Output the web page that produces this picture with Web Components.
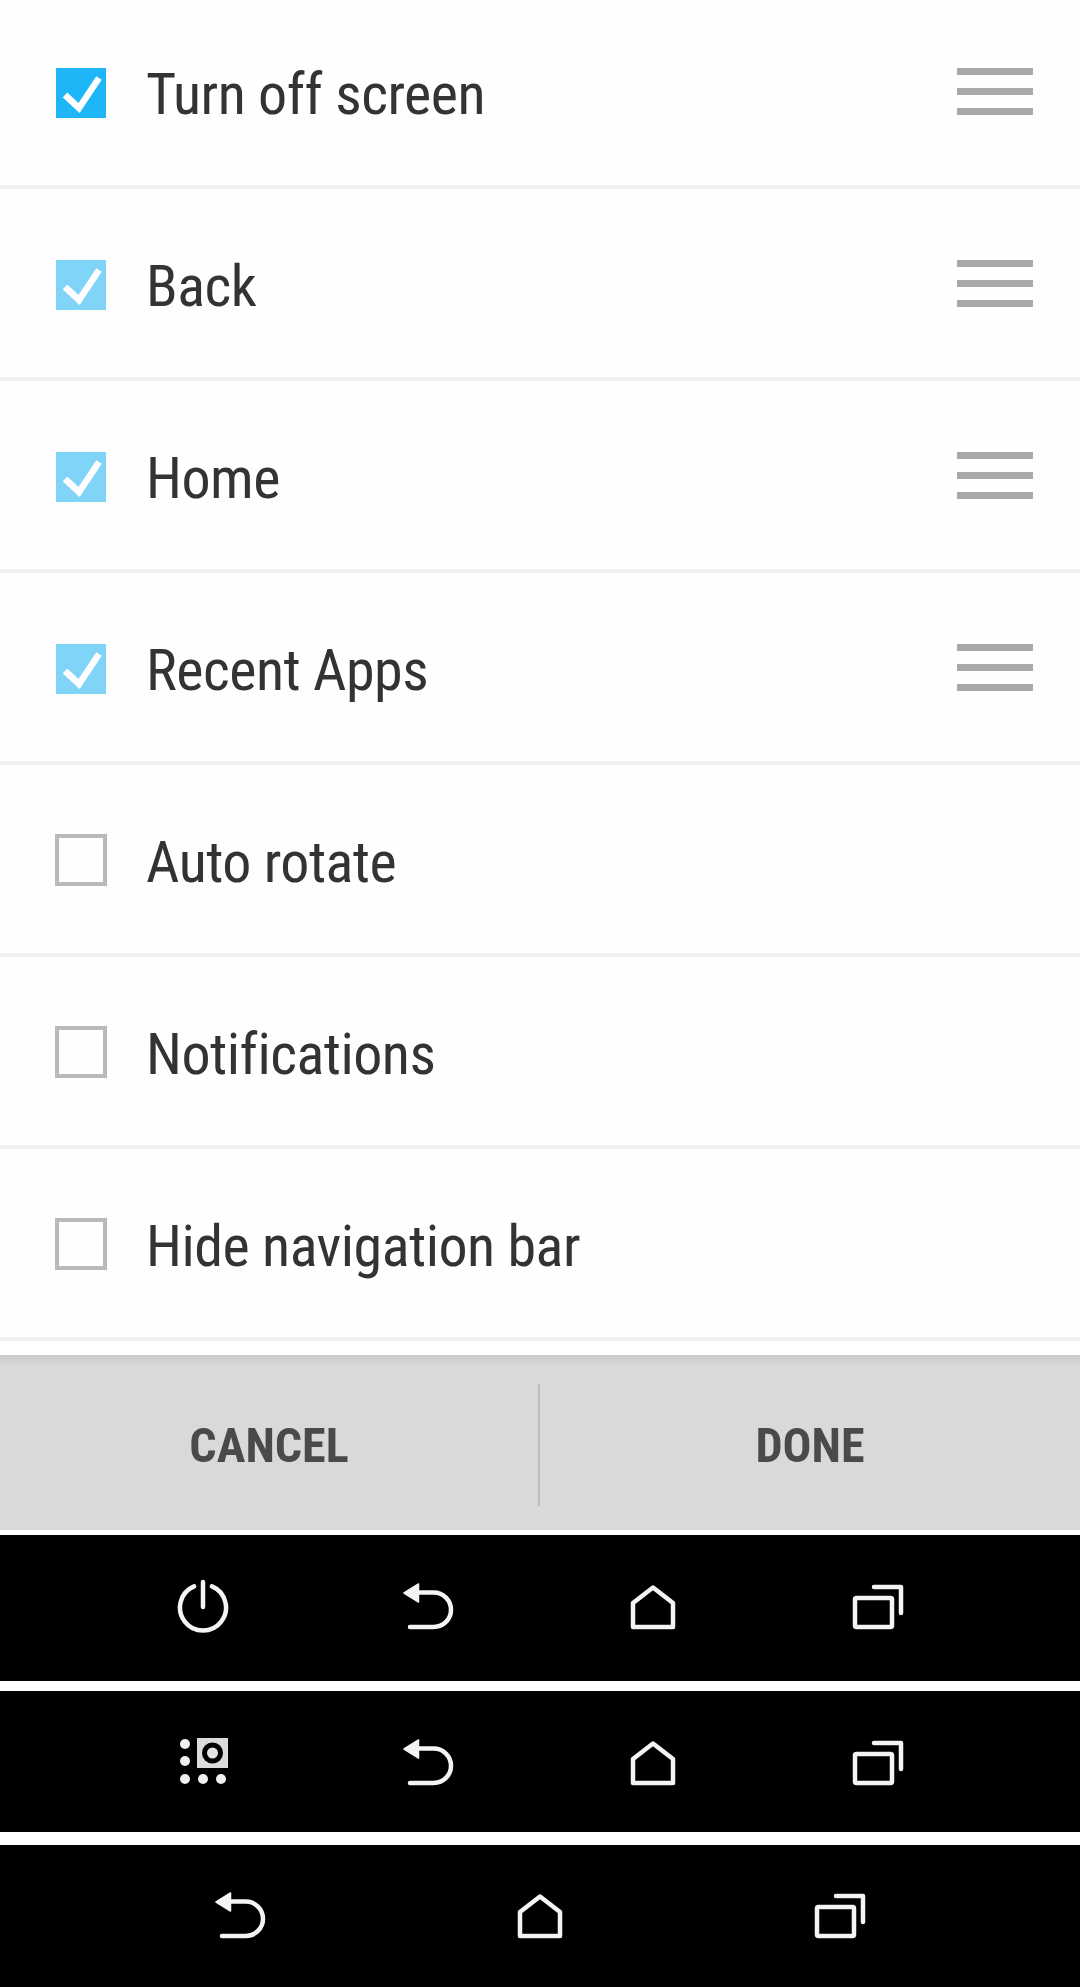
<!DOCTYPE html>
<html>
<head>
<meta charset="utf-8">
<title>Navigation buttons</title>
<style>
  html, body { margin: 0; padding: 0; background: #fff; }
  body { width: 1080px; height: 1987px; overflow: hidden; font-family: Roboto, "Liberation Sans", sans-serif; }
  nav-bar.first { margin-bottom: 10px; }
  nav-bar.second { margin-bottom: 13px; }
</style>
</head>
<body>
  <setting-row checked="strong" draggable-row>Turn off screen</setting-row>
  <setting-row checked="soft" draggable-row>Back</setting-row>
  <setting-row checked="soft" draggable-row>Home</setting-row>
  <setting-row checked="soft" draggable-row>Recent Apps</setting-row>
  <setting-row>Auto rotate</setting-row>
  <setting-row>Notifications</setting-row>
  <setting-row>Hide navigation bar</setting-row>

  <action-bar>
    <span slot="left">CANCEL</span>
    <span slot="right">DONE</span>
  </action-bar>

  <nav-bar class="first" style="--bar-height:146px;--shift:4px">
    <nav-icon name="power"></nav-icon>
    <nav-icon name="back"></nav-icon>
    <nav-icon name="home"></nav-icon>
    <nav-icon name="recent"></nav-icon>
  </nav-bar>
  <nav-bar class="second" style="--bar-height:141px;--shift:0px">
    <nav-icon name="apps"></nav-icon>
    <nav-icon name="back"></nav-icon>
    <nav-icon name="home"></nav-icon>
    <nav-icon name="recent"></nav-icon>
  </nav-bar>
  <nav-bar style="--bar-height:142px;--shift:2px">
    <nav-icon name="back"></nav-icon>
    <nav-icon name="home"></nav-icon>
    <nav-icon name="recent"></nav-icon>
  </nav-bar>

<script>
// one row of the list
class SettingRow extends HTMLElement {
  constructor() {
    super();
    const shadow = this.attachShadow({ mode: "open" });
    const state = this.getAttribute("checked");
    const fill = state === "strong" ? "#1fb6f8" : "#80d4f8";

    const box = state
      ? `<svg class="box" width="50" height="50" viewBox="0 0 50 50">
           <rect width="50" height="50" fill="${fill}"/>
           <path d="M9 27 L23 40 L43 10" fill="none" stroke="#fff" stroke-width="6.5"/>
         </svg>`
      : `<div class="box empty"></div>`;

    const handle = this.hasAttribute("draggable-row")
      ? `<div class="handle"><i></i><i></i><i></i></div>`
      : "";

    shadow.innerHTML = `
      <style>
        :host {
          display: block;
          height: 192px;
          box-sizing: border-box;
          padding-bottom: 3px;
          background: #fefefe;
        }
        .row {
          display: flex;
          align-items: center;
          height: 185px;
          padding: 0 47px 0 56px;
          border-bottom: 4px solid #f0f0f0;
        }
        .box { flex: none; display: block; filter: blur(.6px); }
        .empty {
          width: 52px;
          height: 52px;
          margin: -2px -1px 0 -1px;
          box-sizing: border-box;
          border: 4px solid #bababa;
        }
        .label {
          flex: 1;
          margin-left: 40px;
          padding-top: 2px;
          font: 400 58px/1 Roboto, "Liberation Sans", sans-serif;
          font-stretch: 75%;
          letter-spacing: -.5px;
          color: #333335;
          filter: blur(.5px);
          white-space: nowrap;
        }
        .handle {
          display: flex;
          flex-direction: column;
          gap: 13px;
          width: 76px;
          margin-top: -2px;
          filter: blur(.7px);
        }
        .handle i { display: block; height: 7px; background: #a9a9a9; }
      </style>
      <div class="row">
        ${box}
        <div class="label"><slot></slot></div>
        ${handle}
      </div>
    `;
  }
}

// cancel / done strip
class ActionBar extends HTMLElement {
  constructor() {
    super();
    const shadow = this.attachShadow({ mode: "open" });
    shadow.innerHTML = `
      <style>
        :host {
          display: block;
          margin-top: 11px;
          padding-bottom: 5px;
          background: #fff;
        }
        .bar {
          display: grid;
          grid-template-columns: 1fr 1fr;
          align-items: center;
          height: 175px;
          background: linear-gradient(#cbccce, #d8d9db 12px);
        }
        .btn {
          display: flex;
          align-items: center;
          justify-content: center;
          height: 122px;
          margin-top: 4px;
          font: 700 48px/1 Roboto, "Liberation Sans", sans-serif;
          font-stretch: 75%;
          color: #4a4a4c;
        }
        .btn span { padding-top: 3px; filter: blur(.5px); }
        .btn.left { border-right: 2px solid #bcbdbf; }
      </style>
      <div class="bar">
        <div class="btn left"><span><slot name="left"></slot></span></div>
        <div class="btn"><span><slot name="right"></slot></span></div>
      </div>
    `;
  }
}

// black strip with soft keys, columns come from the number of children
class NavBar extends HTMLElement {
  constructor() {
    super();
    const shadow = this.attachShadow({ mode: "open" });
    shadow.innerHTML = `
      <style>
        :host {
          display: flex;
          box-sizing: border-box;
          height: var(--bar-height);
          padding: 0 90px var(--shift);
          background: #000;
          align-items: center;
        }
        .keys {
          flex: 1;
          display: grid;
          grid-auto-flow: column;
          grid-auto-columns: 1fr;
          justify-items: center;
        }
      </style>
      <div class="keys"><slot></slot></div>
    `;
  }
}

const ICONS = {
  power: `<path d="M21 10.4 A23 23 0 1 0 39 10.4"/><path d="M30 6 V31"/>`,
  back: `<path d="M20 16.5 H35.75 A17.25 17.25 0 0 1 35.75 51 H12"/>
         <polygon points="6,17 20.5,8 20.5,26" fill="#f4f4f4" stroke="#f4f4f4" stroke-width="1.5"/>`,
  home: `<path d="M30 11.5 L50 27 V51 H10 V27 Z"/>`,
  recent: `<rect x="7" y="22" width="37" height="29" rx="1.5"/><path d="M26 11 H53 V37"/>`,
  apps: `<g fill="#f0f0f0" stroke="none">
           <circle cx="12" cy="12" r="5"/><circle cx="12" cy="29" r="5"/>
           <circle cx="12" cy="47" r="5"/><circle cx="30" cy="47" r="5"/>
           <circle cx="48" cy="47" r="5"/>
           <rect x="24" y="6" width="31" height="30" fill="#dcdcdc"/>
           <circle cx="39.5" cy="21" r="10.5" fill="#000"/>
           <circle cx="39.5" cy="21" r="5.5" fill="#e4e4e4"/>
         </g>`
};

class NavIcon extends HTMLElement {
  constructor() {
    super();
    const shadow = this.attachShadow({ mode: "open" });
    const name = this.getAttribute("name");
    shadow.innerHTML = `
      <style>
        :host { display: block; width: 60px; height: 60px; }
        svg {
          display: block;
          fill: none;
          stroke: #f4f4f4;
          stroke-width: 4.5;
          stroke-linecap: round;
          stroke-linejoin: round;
          filter: blur(.6px);
        }
      </style>
      <svg width="60" height="60" viewBox="0 0 60 60">${ICONS[name]}</svg>
    `;
  }
}

customElements.define("setting-row", SettingRow);
customElements.define("action-bar", ActionBar);
customElements.define("nav-bar", NavBar);
customElements.define("nav-icon", NavIcon);
</script>
</body>
</html>
